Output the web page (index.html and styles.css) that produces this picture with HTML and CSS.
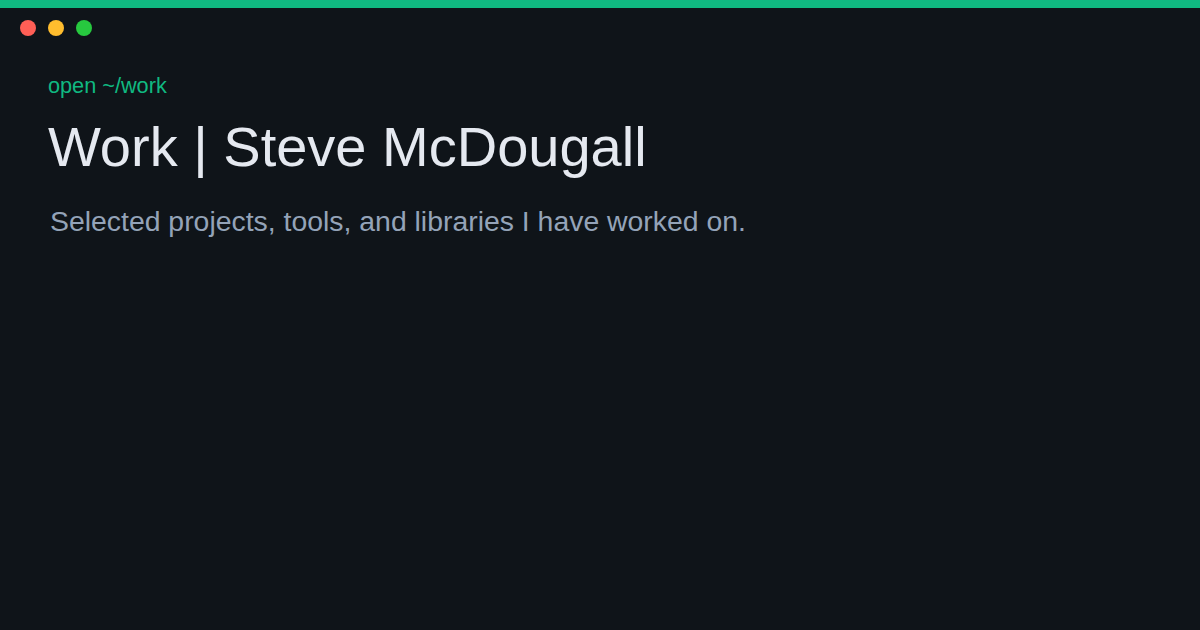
FILE: index.html
```html
<!DOCTYPE html>
<html>
<head>
<meta charset="utf-8">
<link rel="stylesheet" href="styles.css">
</head>
<body>
<div class="topbar"></div>
<div class="dots">
  <span class="dot red"></span>
  <span class="dot yellow"></span>
  <span class="dot green"></span>
</div>
<main class="content">
  <div class="cmd">open ~/work</div>
  <h1 class="title">Work | Steve McDougall</h1>
  <p class="desc">Selected projects, tools, and libraries I have worked on.</p>
</main>
</body>
</html>
```

FILE: styles.css
```css
html, body {
  margin: 0;
  padding: 0;
  width: 1200px;
  height: 630px;
  overflow: hidden;
  background: #0f1419;
  font-family: "Liberation Sans", Arial, sans-serif;
}
.topbar {
  height: 8px;
  background: #10b981;
}
.dots {
  display: flex;
  gap: 12px;
  padding: 12px 0 0 20px;
}
.dot {
  width: 16px;
  height: 16px;
  border-radius: 50%;
}
.red { background: #ff5f56; }
.yellow { background: #ffbd2e; }
.green { background: #27c93f; }
.content {
  padding: 37px 0 0 48px;
}
.cmd {
  color: #10b981;
  font-size: 21.7px;
  line-height: 26px;
}
.title {
  margin: 16px 0 0 0;
  color: #e5e9f0;
  font-weight: 400;
  font-size: 56px;
  line-height: 64px;
}
.desc {
  margin: 25px 0 0 2px;
  color: #94a3b8;
  font-size: 28.4px;
  line-height: 34px;
}
```
